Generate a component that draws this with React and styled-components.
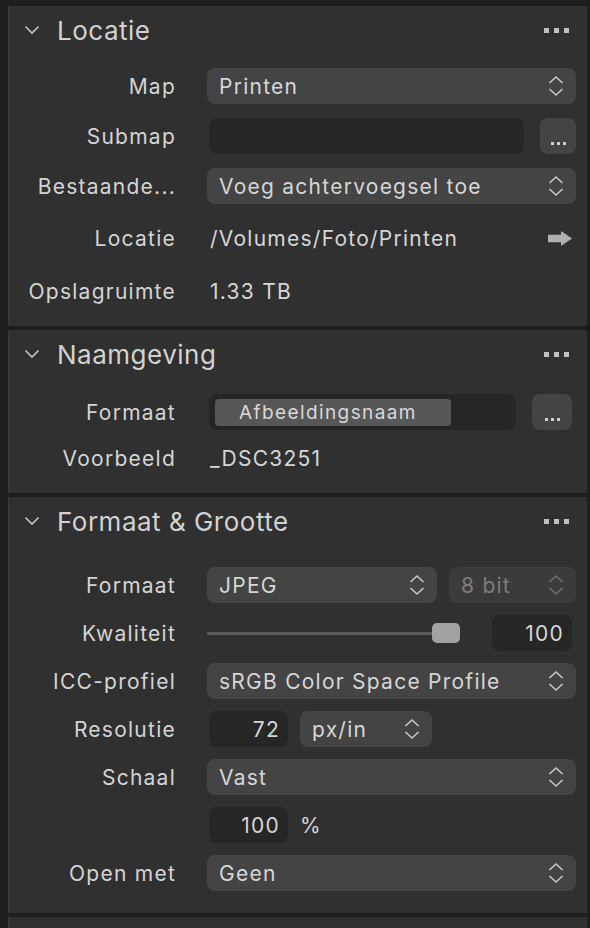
import styled, { createGlobalStyle } from "styled-components";

const Global = createGlobalStyle`
  html, body {
    margin: 0;
    background: #1e1e1e;
  }
  * { box-sizing: border-box; }
`;

const Frame = styled.div`
  width: 590px;
  height: 928px;
  padding: 6px 3px 0 8px;
  display: flex;
  flex-direction: column;
  gap: 4px;
  overflow: hidden;
  font-family: Inter, "Open Sans", sans-serif;
  color: #d4d4d4;
`;

const Section = styled.section`
  background: #303030;
  border-left: 1px solid #3b3b3b;
  height: ${(p) => p.$height}px;
  flex-shrink: 0;
`;

const Header = styled.div`
  height: 48px;
  display: flex;
  align-items: center;
  padding: 0 18px 0 15px;
`;

const Title = styled.h2`
  flex: 1;
  margin: 0 0 0 17px;
  font-size: 26px;
  font-weight: 400;
  color: #d2d2d2;
  letter-spacing: 0.5px;
`;

const Dots = styled.div`
  display: flex;
  gap: 5px;
  span {
    width: 5px;
    height: 5px;
    background: #c0c0c0;
  }
`;

const Body = styled.div`
  display: grid;
  grid-template-columns: 167px 1fr;
  column-gap: 31px;
  row-gap: ${(p) => p.$gap}px;
  padding: ${(p) => p.$top}px 11px 0 0;
  font-size: 21px;
  letter-spacing: 1.25px;
`;

const Label = styled.div`
  height: ${(p) => p.$h || 36}px;
  display: flex;
  align-items: center;
  justify-content: flex-end;
  color: #d4d4d4;
  white-space: nowrap;
`;

const Control = styled.div`
  height: ${(p) => p.$h || 36}px;
  display: flex;
  align-items: center;
  gap: ${(p) => p.$gap ?? 12}px;
  padding-right: ${(p) => p.$pr || 0}px;
`;

const Select = styled.div`
  height: 36px;
  flex: ${(p) => (p.$width ? "none" : 1)};
  width: ${(p) => (p.$width ? `${p.$width}px` : "auto")};
  background: ${(p) => (p.$disabled ? "#3b3b3b" : "#444444")};
  border-radius: 8px;
  display: flex;
  align-items: center;
  justify-content: space-between;
  padding: 0 12px;
  color: ${(p) => (p.$disabled ? "#7c7c7c" : "#d6d6d6")};
  white-space: nowrap;
`;

const Field = styled.div`
  height: 36px;
  flex: ${(p) => (p.$width ? "none" : 1)};
  width: ${(p) => (p.$width ? `${p.$width}px` : "auto")};
  margin-left: ${(p) => p.$ml || 0}px;
  background: #262626;
  border-radius: 8px;
  display: flex;
  align-items: center;
  justify-content: ${(p) => (p.$right ? "flex-end" : "flex-start")};
  padding: 0 ${(p) => (p.$right ? 8 : 6)}px;
  color: #d6d6d6;
`;

const Token = styled.div`
  width: 236px;
  height: 27px;
  background: #575757;
  border-radius: 4px;
  padding-left: 24px;
  display: flex;
  align-items: center;
  font-size: 19px;
  letter-spacing: 1.4px;
  color: #d8d8d8;
`;

const MoreButton = styled.div`
  width: ${(p) => p.$width || 36}px;
  height: 36px;
  flex: none;
  background: #444444;
  border-radius: 8px;
  display: flex;
  align-items: flex-end;
  justify-content: center;
  padding-bottom: 9px;
  gap: 3px;
  span {
    width: 3px;
    height: 3px;
    background: #cfcfcf;
  }
`;

const Value = styled.div`
  flex: 1;
  color: #d6d6d6;
  padding-left: 3px;
  display: flex;
  align-items: center;
  justify-content: space-between;
  padding-right: 4px;
`;

const Unit = styled.span`
  color: #d6d6d6;
`;

const Slider = styled.div`
  flex: 1;
  height: 36px;
  display: flex;
  align-items: center;
  padding-right: 32px;
`;

const Track = styled.div`
  flex: 1;
  height: 3px;
  background: #5c5c5c;
  border-radius: 2px;
  position: relative;
`;

const Thumb = styled.div`
  position: absolute;
  right: 0;
  top: -9px;
  width: 28px;
  height: 20px;
  border-radius: 5px;
  background: #a2a2a2;
`;

const Chevron = () => (
  <svg width="16" height="10" viewBox="0 0 16 10">
    <path d="M1.5 1.5 L8 8 L14.5 1.5" fill="none" stroke="#c4c4c4" strokeWidth="1.6" />
  </svg>
);

const UpDown = ({ dim }) => (
  <svg width="16" height="24" viewBox="0 0 16 24">
    <g fill="none" stroke={dim ? "#6f6f6f" : "#c8c8c8"} strokeWidth="1.6">
      <path d="M1.5 9 L8 3 L14.5 9" />
      <path d="M1.5 15 L8 21 L14.5 15" />
    </g>
  </svg>
);

const Arrow = () => (
  <svg width="24" height="15" viewBox="0 0 24 15">
    <path d="M0 3.8 H13 V0 L24 7.5 L13 15 V11.2 H0 Z" fill="#b0b0b0" />
  </svg>
);

const SectionHeader = ({ title }) => (
  <Header>
    <Chevron />
    <Title>{title}</Title>
    <Dots><span /><span /><span /></Dots>
  </Header>
);

const More = ({ width }) => (
  <MoreButton $width={width}><span /><span /><span /></MoreButton>
);

const Dropdown = ({ children, width, disabled }) => (
  <Select $width={width} $disabled={disabled}>
    <span>{children}</span>
    <UpDown dim={disabled} />
  </Select>
);

export default function App() {
  return (
    <>
      <Global />
      <Frame>
        <Section $height={320}>
          <SectionHeader title="Locatie" />
          <Body $top={14} $gap={14}>
            <Label>Map</Label>
            <Control><Dropdown>Printen</Dropdown></Control>

            <Label>Submap</Label>
            <Control $gap={16}>
              <Field $ml={2} />
              <More />
            </Control>

            <Label>Bestaande...</Label>
            <Control><Dropdown>Voeg achtervoegsel toe</Dropdown></Control>

            <Label $h={40}>Locatie</Label>
            <Control $h={40}>
              <Value>
                <span>/Volumes/Foto/Printen</span>
                <Arrow />
              </Value>
            </Control>

            <Label $h={38}>Opslagruimte</Label>
            <Control $h={38}><Value>1.33 TB</Value></Control>
          </Body>
        </Section>

        <Section $height={163}>
          <SectionHeader title="Naamgeving" />
          <Body $top={16} $gap={10}>
            <Label>Formaat</Label>
            <Control $gap={16} $pr={4}>
              <Field $ml={2}>
                <Token>Afbeeldingsnaam</Token>
              </Field>
              <More width={40} />
            </Control>

            <Label>Voorbeeld</Label>
            <Control><Value>_DSC3251</Value></Control>
          </Body>
        </Section>

        <Section $height={416}>
          <SectionHeader title="Formaat &amp; Grootte" />
          <Body $top={22} $gap={12}>
            <Label>Formaat</Label>
            <Control>
              <Dropdown width={230}>JPEG</Dropdown>
              <Dropdown disabled>8 bit</Dropdown>
            </Control>

            <Label>Kwaliteit</Label>
            <Control $gap={0} $pr={4}>
              <Slider>
                <Track><Thumb /></Track>
              </Slider>
              <Field $width={80} $right>100</Field>
            </Control>

            <Label>ICC-profiel</Label>
            <Control><Dropdown>sRGB Color Space Profile</Dropdown></Control>

            <Label>Resolutie</Label>
            <Control>
              <Field $width={79} $ml={2} $right>72</Field>
              <Dropdown width={132}>px/in</Dropdown>
            </Control>

            <Label>Schaal</Label>
            <Control><Dropdown>Vast</Dropdown></Control>

            <Label />
            <Control>
              <Field $width={79} $ml={2} $right>100</Field>
              <Unit>%</Unit>
            </Control>

            <Label>Open met</Label>
            <Control><Dropdown>Geen</Dropdown></Control>
          </Body>
        </Section>

        <Section $height={40} />
      </Frame>
    </>
  );
}
